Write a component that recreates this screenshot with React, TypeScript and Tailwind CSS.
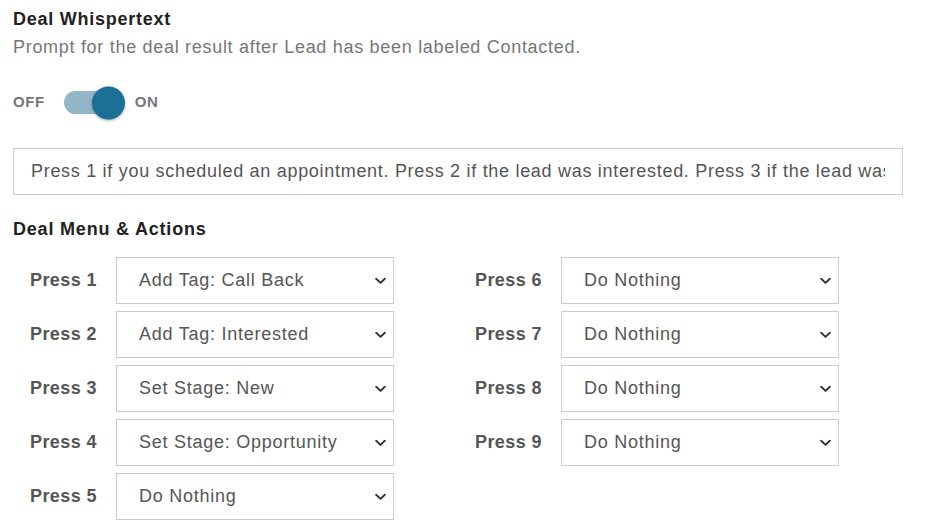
import { useState } from "react";

const left = [
  { key: 1, value: "Add Tag: Call Back" },
  { key: 2, value: "Add Tag: Interested" },
  { key: 3, value: "Set Stage: New" },
  { key: 4, value: "Set Stage: Opportunity" },
  { key: 5, value: "Do Nothing" },
];

const right = [
  { key: 6, value: "Do Nothing" },
  { key: 7, value: "Do Nothing" },
  { key: 8, value: "Do Nothing" },
  { key: 9, value: "Do Nothing" },
];

const options = [
  "Do Nothing",
  "Add Tag: Call Back",
  "Add Tag: Interested",
  "Set Stage: New",
  "Set Stage: Opportunity",
];

function Chevron() {
  return (
    <svg
      width="11"
      height="7"
      viewBox="0 0 11 7"
      className="pointer-events-none absolute right-[8px] top-1/2 -translate-y-1/2"
    >
      <path
        d="M1.2 1.2 L5.5 5.4 L9.8 1.2"
        fill="none"
        stroke="#333"
        strokeWidth="1.9"
        strokeLinecap="round"
        strokeLinejoin="round"
      />
    </svg>
  );
}

function PressRow({ n, value }: { n: number; value: string }) {
  return (
    <div className="flex items-center pl-[17px]">
      <label className="w-[86px] text-[18px] font-bold tracking-[0.4px] text-[#555]">
        Press {n}
      </label>
      <div className="relative w-[278px]">
        <select
          defaultValue={value}
          className="h-[47px] w-full appearance-none border border-[#ccc] bg-white pl-[22px] pr-8 text-[18px] tracking-[0.75px] text-[#555] outline-none"
        >
          {options.map((o) => (
            <option key={o} value={o}>
              {o}
            </option>
          ))}
        </select>
        <Chevron />
      </div>
    </div>
  );
}

export default function App() {
  const [on, setOn] = useState(true);

  return (
    <div className="min-h-[530px] bg-white px-[13px] pt-[8px] font-['Liberation_Sans',Arial,sans-serif]">
      <h2 className="text-[18px] font-bold leading-[22px] tracking-[0.75px] text-[#222]">
        Deal Whispertext
      </h2>
      <p className="mt-[6px] text-[18px] leading-[22px] tracking-[0.7px] text-[#777]">
        Prompt for the deal result after Lead has been labeled Contacted.
      </p>

      <div className="mt-[33px] flex items-center">
        <span className="text-[15px] font-bold tracking-[0.6px] text-[#777]">OFF</span>
        <button
          type="button"
          onClick={() => setOn(!on)}
          className="relative ml-[19px] h-[23px] w-[57px] rounded-full bg-[#93b6c8]"
        >
          <span className="absolute right-[-4px] top-1/2 h-[33px] w-[33px] -translate-y-1/2 rounded-full bg-[#1a7096] shadow-[0_1px_3px_rgba(0,0,0,0.35)]" />
        </button>
        <span className="ml-[14px] text-[15px] font-bold tracking-[0.6px] text-[#777]">ON</span>
      </div>

      <input
        type="text"
        readOnly
        value="Press 1 if you scheduled an appointment. Press 2 if the lead was interested. Press 3 if the lead was not interested."
        className="mt-[34px] block h-[47px] w-[890px] border border-[#ccc] px-[17px] text-[18px] tracking-[0.7px] text-[#555] outline-none"
      />

      <h3 className="mt-[23px] text-[18px] font-bold leading-[22px] tracking-[0.8px] text-[#222]">
        Deal Menu &amp; Actions
      </h3>

      <div className="mt-[17px] grid w-[890px] grid-cols-[445px_445px]">
        <div className="flex flex-col gap-[7px]">
          {left.map((r) => (
            <PressRow key={r.key} n={r.key} value={r.value} />
          ))}
        </div>
        <div className="flex flex-col gap-[7px]">
          {right.map((r) => (
            <PressRow key={r.key} n={r.key} value={r.value} />
          ))}
        </div>
      </div>
    </div>
  );
}
